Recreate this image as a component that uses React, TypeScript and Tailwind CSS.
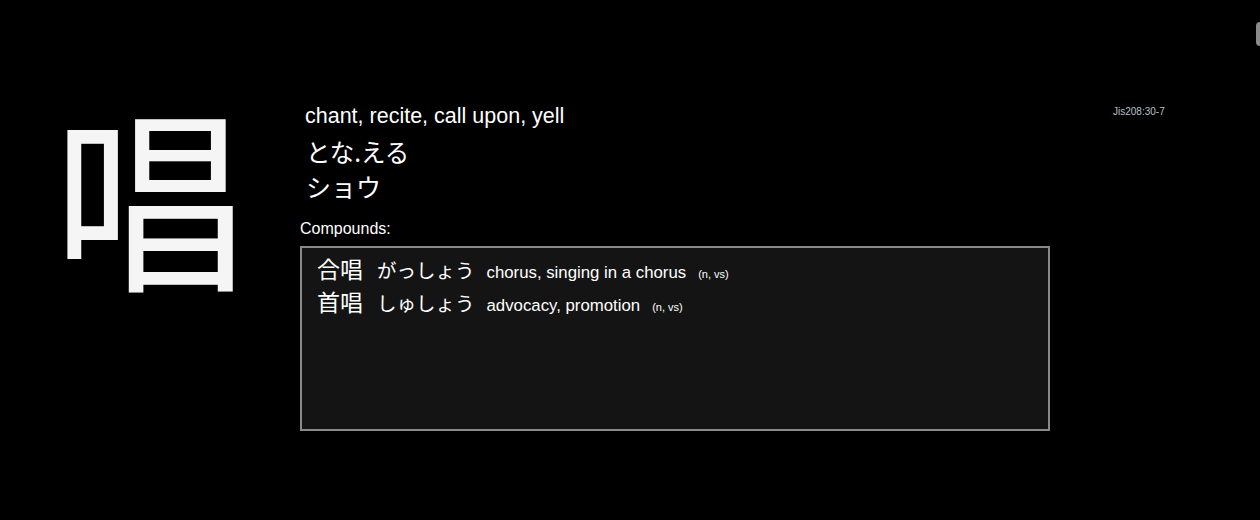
import React from "react";

const compounds = [
  { word: "合唱", reading: "がっしょう", meaning: "chorus, singing in a chorus", pos: "(n, vs)" },
  { word: "首唱", reading: "しゅしょう", meaning: "advocacy, promotion", pos: "(n, vs)" },
];

export default function App() {
  return (
    <div className="relative w-[1260px] h-[520px] overflow-hidden bg-black text-white font-['Liberation_Sans','Noto_Sans_CJK_JP',sans-serif]">
      <div className="flex">
        <div className="w-[300px] shrink-0 pl-[52px] pt-[93px]">
          <div className="text-[196px] leading-none font-['Noto_Sans_CJK_JP',sans-serif] text-[#f5f5f5]">唱</div>
        </div>
        <div className="w-[750px] shrink-0 pt-[103px]">
          <div className="pl-[5px] text-[21.5px] leading-[26px]">chant, recite, call upon, yell</div>
          <div className="mt-[6px] pl-[6px] text-[24.5px] leading-[34px] font-['Noto_Sans_CJK_JP',sans-serif]">とな.える</div>
          <div className="pl-[6px] text-[25px] leading-[34px] font-['Noto_Sans_CJK_JP',sans-serif]">ショウ</div>
          <div className="mt-[17px] text-[16px] leading-[18px]">Compounds:</div>
          <div className="mt-[8px] h-[185px] border-2 border-[#8a8a8a] bg-[#141414] pl-[15px] pt-[3px]">
            {compounds.map((c) => (
              <div key={c.word} className="flex items-baseline h-[33px]">
                <span className="text-[23px] font-['Noto_Sans_CJK_JP',sans-serif]">{c.word}</span>
                <span className="ml-[14px] text-[19.5px] font-['Noto_Sans_CJK_JP',sans-serif]">{c.reading}</span>
                <span className="ml-[12px] text-[16.8px]">{c.meaning}</span>
                <span className="ml-[12px] text-[11px]">{c.pos}</span>
              </div>
            ))}
          </div>
        </div>
        <div className="ml-[63px] pt-[104px] text-[10px] text-[#b8c0cc]">Jis208:30-7</div>
      </div>
      <div className="absolute right-[-6px] top-[22px] w-[10px] h-[24px] rounded-[4px] bg-[#8a8a8a]" />
    </div>
  );
}
